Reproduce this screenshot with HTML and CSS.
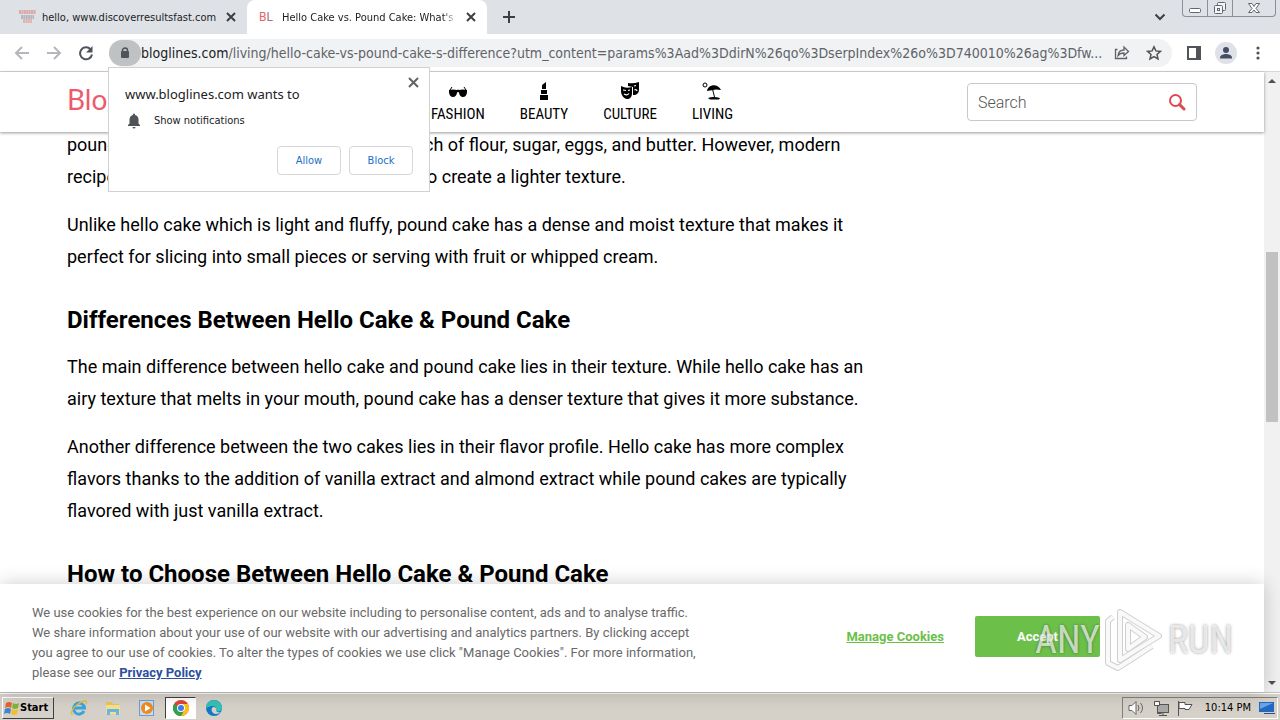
FILE: index.html
```html
<!DOCTYPE html>
<html lang="en">
<head>
    <meta charset="UTF-8">
    <meta name="viewport" content="width=device-width, initial-scale=1.0">
    <title>Hello Cake vs. Pound Cake</title>
    <link rel="stylesheet" href="styles.css">
</head>
<body>
    <!-- Tab strip -->
    <div class="tabs">
        <div class="tab">
            <svg class="favicon" width="17" height="14" viewBox="0 0 17 14" fill="none" stroke-width="4">
                <path d="M0 2h17" stroke="#dca9a9" stroke-dasharray="2 .4"/>
                <path d="M2 7h13" stroke="#b6b5c4" stroke-dasharray="2 .4"/>
                <path d="M4 11h9" stroke="#e2b3af" stroke-dasharray="2 .4"/>
            </svg>
            <span class="tab-title">hello, www.discoverresultsfast.com</span>
            <button class="icon-btn" aria-label="Close tab">
                <svg width="10" height="10" viewBox="0 0 10 10" stroke="#3c4043" stroke-width="2"><path d="M1 1l8 8M9 1l-8 8"/></svg>
            </button>
        </div>
        <div class="tab active">
            <span class="favicon bl">B<b>L</b></span>
            <span class="tab-title fade">Hello Cake vs. Pound Cake: What's the Difference</span>
            <button class="icon-btn" aria-label="Close tab">
                <svg width="10" height="10" viewBox="0 0 10 10" stroke="#3c4043" stroke-width="2"><path d="M1 1l8 8M9 1l-8 8"/></svg>
            </button>
        </div>
        <button class="icon-btn new-tab" aria-label="New tab">
            <svg width="12" height="12" viewBox="0 0 12 12" stroke="#3c4043" stroke-width="2"><path d="M6 0v12M0 6h12"/></svg>
        </button>
        <button class="icon-btn tab-search" aria-label="Search tabs">
            <svg width="12" height="8" viewBox="0 0 12 8" fill="none" stroke="#3c4043" stroke-width="2"><path d="M1.500 1.500L6 6l4.500-4.500"/></svg>
        </button>
        <div class="window-controls">
            <button aria-label="Minimize"><svg width="12" height="16" fill="#fff" stroke="#64676d"><rect x=".5" y="8.500" width="11" height="4" rx="1"/></svg></button>
            <button aria-label="Restore"><svg width="14" height="16" fill="#f4f5f7" stroke="#64676d"><rect x="4.500" y="2.500" width="8" height="8" rx="1"/><rect x="1.500" y="5.500" width="8" height="8" rx="1"/><rect x="4.500" y="8.500" width="2" height="2"/></svg></button>
            <button class="wide" aria-label="Close"><svg width="12" height="16" fill="#fff" stroke="#64676d"><path d="M.500 3.500h3.500l2 3 2-3h3.500l-3.500 5 3.500 4h-3.500l-2-2.500-2 2.500h-3.500l3.500-4z"/></svg></button>
        </div>
    </div>

    <!-- Toolbar -->
    <div class="toolbar">
        <button class="icon-btn nav-btn" aria-label="Back">
            <svg width="16" height="16" viewBox="0 0 16 16" fill="none" stroke="#b4b7bb" stroke-width="2"><path d="M15 8H2M8 2L2 8l6 6"/></svg>
        </button>
        <button class="icon-btn nav-btn" aria-label="Forward">
            <svg width="16" height="16" viewBox="0 0 16 16" fill="none" stroke="#b4b7bb" stroke-width="2"><path d="M1 8h13M8 2l6 6-6 6"/></svg>
        </button>
        <button class="icon-btn nav-btn" aria-label="Reload">
            <svg width="16" height="16" viewBox="0 0 16 16"><path d="M12.500 4.200A6 6 0 1 0 14 9.500" fill="none" stroke="#505357" stroke-width="2"/><path d="M14.500 1v6.500H8z" fill="#505357"/></svg>
        </button>
        <div class="address">
            <button class="lock" aria-label="Site information">
                <svg width="10" height="12" viewBox="0 0 10 12"><path d="M2.500 5V3.500a2.500 2.500 0 0 1 5 0V5" fill="none" stroke="#505357" stroke-width="1.500"/><rect x="1" y="4" width="8" height="7" rx="1" fill="#505357"/></svg>
            </button>
            <div class="url"><span>bloglines.com</span>/living/hello-cake-vs-pound-cake-s-difference?utm_content=params%3Aad%3DdirN%26qo%3DserpIndex%26o%3D740010%26ag%3Dfw...</div>
            <button class="icon-btn" aria-label="Share">
                <svg width="16" height="16" viewBox="0 0 16 16" fill="none" stroke="#5f6368" stroke-width="1.300"><path d="M3.500 4.500h-2v9h11v-2M4 10.500c.5-4 3-5.500 6-5.500V2l4.500 4.500L10 10.500V8c-2.500 0-4.500.5-6 2.500z"/></svg>
            </button>
            <button class="icon-btn" aria-label="Bookmark">
                <svg width="16" height="16" viewBox="0 0 16 16" fill="none" stroke="#505357" stroke-width="1.500"><path d="M8 1.800l1.900 4.100 4.500.5-3.400 3 1 4.500-4-2.300-4 2.300 1-4.500-3.400-3 4.500-.5z"/></svg>
            </button>

            <!-- Permission prompt -->
            <div class="prompt" role="dialog" aria-label="Permission request">
                <button class="icon-btn prompt-close" aria-label="Close">
                    <svg width="11" height="11" viewBox="0 0 11 11" stroke="#5f6368" stroke-width="2"><path d="M1 1l9 9M10 1l-9 9"/></svg>
                </button>
                <div class="prompt-title">www.bloglines.com wants to</div>
                <div class="prompt-row">
                    <svg width="14" height="16" viewBox="0 0 14 16" fill="#505357"><path d="M1 13v-1l1.500-1.500V6.500C2.500 4 4 2.500 6 2V1.500a1 1 0 0 1 2 0V2c2 .5 3.500 2 3.500 4.500v4L13 12v1zM5.500 14h3a1.500 1.500 0 0 1-3 0z"/></svg>
                    Show notifications
                </div>
                <div class="prompt-actions">
                    <button>Allow</button>
                    <button>Block</button>
                </div>
            </div>
        </div>
        <button class="icon-btn tool" aria-label="Side panel">
            <svg width="14" height="14" viewBox="0 0 14 14"><rect x="1" y="1" width="12" height="12" fill="none" stroke="#505357" stroke-width="2"/><path d="M9 1h4v12H9z" fill="#505357"/></svg>
        </button>
        <button class="icon-btn tool" aria-label="Profile">
            <svg width="22" height="22" viewBox="0 0 22 22"><circle cx="11" cy="11" r="11" fill="#dee1e6"/><g fill="#454d66"><circle cx="11" cy="8" r="3"/><path d="M5 16.500v-1c0-2.500 4-3.500 6-3.500s6 1 6 3.500v1z"/></g></svg>
        </button>
        <button class="icon-btn tool" aria-label="Menu">
            <svg width="4" height="14" viewBox="0 0 4 14" fill="#505357"><circle cx="2" cy="2" r="1.600"/><circle cx="2" cy="7" r="1.600"/><circle cx="2" cy="12" r="1.600"/></svg>
        </button>
    </div>

    <!-- Page -->
    <div class="viewport">
        <div class="page">
            <header class="site-header">
                <a class="logo" href="#">Bloglines</a>
                <nav class="site-nav">
                    <a href="#">
                        <svg width="20" height="20" viewBox="0 0 20 20"><path d="M1 9q4-1 8 0 1-1 2 0 4-1 8 0v2c0 3-2 5-4 5s-4-2-4-4.500q-1-1-2 0C9 14 7 16 5 16s-4-2-4-5z"/><path d="M2 9l2-3M18 9l-2-3" stroke="#000" fill="none"/></svg>
                        FASHION
                    </a>
                    <a href="#">
                        <svg width="20" height="20" viewBox="0 0 20 20"><path d="M8 8V4l4-3v7zM7 9h6v4H7zM6 14h8v5H6z"/></svg>
                        BEAUTY
                    </a>
                    <a href="#">
                        <svg width="20" height="20" viewBox="0 0 20 20"><path d="M8 2q5 1 11-1v7c0 4-2 6-6 6V6L8 5z"/><path d="M1 5q5 3 11 1v6c0 4-2 6-5 6s-6-4-6-8z"/><path d="M3 9l3 .5M8 9.500l2-.5M4 13q3 2 5-.5M14 5l2-.5M14.500 9q2-1 2.500 1" stroke="#fff" stroke-width="1.200" fill="none"/></svg>
                        CULTURE
                    </a>
                    <a href="#">
                        <svg width="20" height="20" viewBox="0 0 20 20"><circle cx="3" cy="4" r="2" fill="none" stroke="#000"/><path d="M5 10C6 3 16 2 19 9l-5-.5-3 .5zM11 8l2 8h-1l-2-8zM6 17q5-2 12 0l-1 1.500H8z"/></svg>
                        LIVING
                    </a>
                </nav>
                <form class="search">
                    <input type="search" placeholder="Search" aria-label="Search">
                    <button type="button" aria-label="Search">
                        <svg width="18" height="18" viewBox="0 0 18 18" fill="none" stroke="#dc4a52"><circle cx="7.500" cy="7.500" r="5.500" stroke-width="2"/><path d="M11.500 11.500L16 16" stroke-width="3" stroke-linecap="round"/></svg>
                    </button>
                </form>
            </header>

            <main class="article">
                <p>pound cake recipes call for one full pound each of flour, sugar, eggs, and butter. However, modern recipes often use baking powder and yogurt to create a lighter texture.</p>
                <p>Unlike hello cake which is light and fluffy, pound cake has a dense and moist texture that makes it perfect for slicing into small pieces or serving with fruit or whipped cream.</p>
                <h2>Differences Between Hello Cake &amp; Pound Cake</h2>
                <p>The main difference between hello cake and pound cake lies in their texture. While hello cake has an airy texture that melts in your mouth, pound cake has a denser texture that gives it more substance.</p>
                <p>Another difference between the two cakes lies in their flavor profile. Hello cake has more complex flavors thanks to the addition of vanilla extract and almond extract while pound cakes are typically flavored with just vanilla extract.</p>
                <h2>How to Choose Between Hello Cake &amp; Pound Cake</h2>
            </main>

            <div class="cookies">
                <p>We use cookies for the best experience on our website including to personalise content, ads and to analyse traffic. We share information about your use of our website with our advertising and analytics partners. By clicking accept you agree to our use of cookies. To alter the types of cookies we use click "Manage Cookies". For more information, please see our <a href="#">Privacy Policy</a></p>
                <a class="manage" href="#">Manage Cookies</a>
                <button class="accept">Accept</button>
            </div>
        </div>

        <div class="scrollbar">
            <svg width="16" height="18" fill="#505050"><path d="M4 11l4-4 4 4z"/></svg>
            <div class="track"><div class="thumb"></div></div>
            <svg width="16" height="18" fill="#505050"><path d="M4 7l4 4 4-4z"/></svg>
        </div>

        <div class="watermark">
            <span>ANY</span>
            <svg width="60" height="64" viewBox="0 0 60 64" fill="none" stroke-linejoin="round">
                <g stroke="#c4c4c4" stroke-width="6"><path d="M16 4v48l39-24z"/><path d="M24 17v24l17-12z"/><path d="M9 9l-5 4v42l10 5 34-22"/></g>
                <g stroke="#f8f8f8" stroke-width="4"><path d="M16 4v48l39-24z"/><path d="M24 17v24l17-12z"/><path d="M9 9l-5 4v42l10 5 34-22"/></g>
            </svg>
            <span>RUN</span>
        </div>
    </div>

    <!-- Taskbar -->
    <div class="taskbar">
        <button class="start">
            <svg width="16" height="16" viewBox="0 0 16 16"><path d="M2 3q3-2 6 0L7 8Q4 6 1 8z" fill="#e8622c"/><path d="M9 3q3 2 6 0l-1 5q-3 2-6 0z" fill="#7db63b"/><path d="M1 9q3-2 6 0l-1 5q-3-2-6 0z" fill="#3f86d2"/><path d="M8 9q3 2 6 0l-1 5q-3 2-6 0z" fill="#f4bd31"/></svg>
            Start
        </button>
        <div class="launch">
            <button aria-label="Internet Explorer">
                <svg width="18" height="18" viewBox="0 0 18 18" fill="none"><path d="M14 12A5.500 5.500 0 1 1 14.500 9H5" stroke="#39a5dc" stroke-width="3"/><path d="M3 15C-1 17 2 9 8 5s10-4 8 0" stroke="#e9b93c" stroke-width="1.300"/></svg>
            </button>
            <button aria-label="Explorer">
                <svg width="18" height="18" viewBox="0 0 18 18"><path d="M2 3h6l1 2h6v4H2z" fill="#e7c65a"/><path d="M2 6h14v9H2z" fill="#f5df8f"/><path d="M3 16v-6h12v6h-3v-3H6v3z" fill="#68b6e3"/></svg>
            </button>
            <button aria-label="Media Player">
                <svg width="18" height="18" viewBox="0 0 18 18"><rect x="1.500" y="1.500" width="14" height="15" fill="#c5def4" stroke="#6d9dd0"/><circle cx="9" cy="9" r="6" fill="#f08a1d"/><path d="M7 5.500v7l5.500-3.500z" fill="#fff"/></svg>
            </button>
            <button class="current" aria-label="Chrome">
                <svg width="16" height="16" viewBox="0 0 16 16"><circle cx="8" cy="8" r="8" fill="#e14335"/><path d="M8 8L1.070 4A8 8 0 0 0 8 16l4-7z" fill="#2fa24f"/><path d="M8 16a8 8 0 0 0 6.930-12H8l3.500 6z" fill="#fbc116"/><circle cx="8" cy="8" r="4" fill="#fff"/><circle cx="8" cy="8" r="3" fill="#3f7ee8"/></svg>
            </button>
            <button aria-label="Edge">
                <svg width="18" height="18" viewBox="0 0 18 18"><circle cx="9" cy="9" r="8" fill="#1377c8"/><path d="M1 9a8 8 0 0 1 16 0c0 3-3 4-6 3 1-2 0-5-3-5-4 0-6 2-7 2z" fill="#35c1b4"/><path d="M8 8c-3 2-1 7 3 7 2 0 4-1 5-2-2 1-5 0-5-2 1-1 0-3-3-3z" fill="#d5d0c8"/></svg>
            </button>
        </div>
        <div class="tray">
            <svg width="17" height="16" viewBox="0 0 17 16" fill="#fff" stroke="#666"><path d="M1 5.500h3l4-4v13l-4-4H1z"/><path d="M10 5q2 3 0 6M12.500 3q4 5 0 10" fill="none"/></svg>
            <svg width="16" height="16" viewBox="0 0 16 16" stroke="#555"><rect x="4.500" y="4.500" width="11" height="8" fill="#a9a9a9"/><path d="M6 15.500h8M10 13v2" /><path d="M1.500 1.500h5v4h-2v8h4" fill="none"/><path d="M1.500 1.500h5v4h-5z" fill="#fff"/></svg>
            <svg width="16" height="16" viewBox="0 0 16 16" fill="#fff" stroke="#555"><path d="M1.500 1v15M2 2.500h6v2h7l-3 5H8v-1H2z"/></svg>
            <span class="clock">10:14 PM</span>
            <svg width="16" height="14" viewBox="0 0 16 14"><path d="M0 1h15v10H0z" fill="#2468c0"/><path d="M1 2h13L1 8z" fill="#69a5e7"/><path d="M5 12h11v1H5z" fill="#26538c"/></svg>
        </div>
    </div>
</body>
</html>
```
FILE: styles.css
```css
* {
    box-sizing: border-box;
}
body {
    display: flex;
    flex-direction: column;
    height: 100vh;
    margin: 0;
    overflow: hidden;
    background-color: #fff;
    font-family: "DejaVu Sans Condensed", "DejaVu Sans", sans-serif;
    font-size: 11px;
    color: #202124;
}
button {
    font-family: inherit;
    font-size: inherit;
    color: inherit;
    cursor: pointer;
}
svg {
    display: block;
    flex-shrink: 0;
}
.icon-btn {
    display: flex;
    align-items: center;
    justify-content: center;
    flex-shrink: 0;
    width: 16px;
    height: 16px;
    padding: 0;
    border: none;
    background: none;
}

/* Tab strip */
.tabs {
    display: flex;
    align-items: center;
    height: 34px;
    flex-shrink: 0;
    padding: 0 4px 0 7px;
    background-color: #dee1e6;
}
.tab {
    display: flex;
    align-items: center;
    gap: 6px;
    width: 240px;
    height: 34px;
    padding: 0 8px 0 12px;
}
.tab.active {
    border-radius: 8px 8px 0 0;
    background-color: #fff;
}
.favicon {
    width: 17px;
    flex-shrink: 0;
}
.bl {
    font-family: Roboto, sans-serif;
    font-size: 12px;
    color: #e8636b;
}
.bl b {
    font-weight: 400;
    color: #a8717c;
}
.tab-title {
    flex: 1;
    overflow: hidden;
    white-space: nowrap;
}
.fade {
    -webkit-mask-image: linear-gradient(to right, #000 92%, transparent);
    mask-image: linear-gradient(to right, #000 92%, transparent);
}
.new-tab {
    margin-left: 14px;
}
.tab-search {
    margin: 0 14px 0 auto;
}
.window-controls {
    display: flex;
    align-self: flex-start;
    height: 17px;
    border: 1px solid #8b8f96;
    border-top: none;
    border-radius: 0 0 4px 4px;
}
.window-controls button {
    display: flex;
    justify-content: center;
    width: 25px;
    padding: 0;
    border: none;
    border-right: 1px solid #8b8f96;
    background: none;
}
.window-controls .wide {
    width: 42px;
    border-right: none;
}

/* Toolbar */
.toolbar {
    display: flex;
    align-items: center;
    height: 38px;
    flex-shrink: 0;
    padding: 0 11px 0 6px;
    border-bottom: 1px solid #d5d6d8;
    background-color: #fff;
}
.nav-btn {
    width: 32px;
}
.address {
    position: relative;
    display: flex;
    align-items: center;
    gap: 16px;
    flex: 1;
    min-width: 0;
    height: 28px;
    margin: 0 1px 0 7px;
    padding-right: 10px;
    border-radius: 14px;
    background-color: #f0f2f4;
}
.lock {
    display: flex;
    align-items: center;
    justify-content: center;
    width: 32px;
    height: 26px;
    padding: 0;
    border: none;
    border-radius: 13px;
    background-color: #bfc2c2;
}
.url {
    flex: 1;
    margin: 0 -8px 0 -16px;
    overflow: hidden;
    white-space: nowrap;
    font-size: 14px;
    color: #5f6368;
}
.url span {
    color: #202124;
}
.tool {
    width: 22px;
    margin-left: 10px;
}

/* Permission prompt */
.prompt {
    position: absolute;
    top: 28px;
    left: -1px;
    z-index: 10;
    width: 322px;
    padding: 17px 16px 16px;
    border: 1px solid #cfd0d2;
    background-color: #fff;
}
.prompt-close {
    position: absolute;
    top: 7px;
    right: 8px;
}
.prompt-title {
    line-height: 18px;
    font-family: "Noto Sans", sans-serif;
    font-size: 13px;
}
.prompt-row {
    display: flex;
    align-items: center;
    gap: 13px;
    margin-top: 9px;
    padding-left: 2px;
    line-height: 18px;
}
.prompt-actions {
    display: flex;
    justify-content: flex-end;
    gap: 8px;
    margin-top: 16px;
}
.prompt-actions button {
    width: 64px;
    height: 29px;
    padding: 0;
    border: 1px solid #d5d7da;
    border-radius: 4px;
    background-color: #fff;
    color: #1a6fc9;
}

/* Page */
.viewport {
    position: relative;
    display: flex;
    flex: 1;
    min-height: 0;
}
.page {
    display: flex;
    flex-direction: column;
    flex: 1;
    min-width: 0;
    font-family: Roboto, sans-serif;
    color: #000;
}
.site-header {
    z-index: 2;
    display: flex;
    align-items: center;
    height: 60px;
    flex-shrink: 0;
    padding: 0 67px;
    background-color: #fff;
    box-shadow: 0 1px 3px rgba(0, 0, 0, 0.4);
}
.logo {
    width: 364px;
    padding-bottom: 6px;
    font-family: Lato, sans-serif;
    font-size: 28px;
    font-weight: 400;
    color: #ee5a6c;
    text-decoration: none;
}
.site-nav {
    display: flex;
    gap: 35px;
}
.site-nav a {
    display: flex;
    flex-direction: column;
    align-items: center;
    gap: 2px;
    padding-top: 2px;
    line-height: 22px;
    font-family: "Roboto Condensed", Roboto, sans-serif;
    font-size: 15px;
    color: #000;
    text-decoration: none;
}
.search {
    display: flex;
    align-items: center;
    width: 230px;
    height: 38px;
    margin-left: auto;
    padding: 0 10px;
    border: 1px solid #c9c9c9;
    border-radius: 4px;
}
.search input {
    flex: 1;
    min-width: 0;
    padding: 0;
    border: none;
    outline: none;
    font-family: Roboto, sans-serif;
    font-size: 16px;
    font-weight: 300;
}
.search input::placeholder {
    color: #555;
}
.search button {
    padding: 0;
    border: none;
    background: none;
}
.article {
    flex: 1;
    min-height: 0;
    margin-top: -3px;
    padding: 0 67px;
    overflow: hidden;
}
.article p {
    max-width: 800px;
    margin: 0 0 16px;
    font-size: 18px;
    line-height: 32px;
}
.article h2 {
    margin: 32px 0 16px;
    font-size: 24px;
    line-height: 30px;
}

/* Cookie bar */
.cookies {
    z-index: 1;
    display: flex;
    align-items: center;
    height: 108px;
    flex-shrink: 0;
    padding: 0 164px 4px 32px;
    background-color: #fff;
    box-shadow: 0 0 18px rgba(0, 0, 0, 0.2);
}
.cookies p {
    width: 672px;
    margin: 14px auto 0 0;
    font-size: 13px;
    line-height: 20px;
    color: #696969;
}
.cookies p a {
    font-weight: 700;
    color: #2d4f9e;
}
.manage {
    margin-right: 31px;
    font-size: 13px;
    font-weight: 700;
    color: #6cc04a;
}
.accept {
    width: 125px;
    height: 41px;
    border: none;
    border-radius: 2px;
    background-color: #6cc04a;
    font-size: 13px;
    font-weight: 700;
    color: #fff;
}

/* Scrollbar */
.scrollbar {
    display: flex;
    flex-direction: column;
    width: 16px;
    background-color: #f1f1f1;
}
.track {
    flex: 1;
    padding: 162px 2px 0;
}
.thumb {
    height: 170px;
    background-color: #c1c1c1;
}

.watermark {
    position: absolute;
    right: 47px;
    bottom: 20px;
    z-index: 3;
    display: flex;
    align-items: center;
    gap: 4px;
    font-family: "Liberation Sans Narrow", "Roboto Condensed", sans-serif;
    font-size: 38px;
    color: rgba(255, 255, 255, 0.7);
    text-shadow: 0 0 3px rgba(0, 0, 0, 0.4);
    pointer-events: none;
}
.watermark svg {
    opacity: 0.8;
}

/* Taskbar */
.taskbar {
    display: flex;
    align-items: center;
    height: 28px;
    flex-shrink: 0;
    padding: 2px 2px 0;
    border-top: 1px solid #c4c1bb;
    background-color: #d5d0c8;
    box-shadow: inset 0 1px 0 #fff;
    color: #000;
}
.start {
    display: flex;
    align-items: center;
    width: 52px;
    height: 22px;
    padding: 0 0 0 1px;
    border: 1px solid #fff;
    border-right-color: #404040;
    border-bottom-color: #404040;
    background-color: #d5d0c8;
    font-weight: 700;
}
.launch {
    display: flex;
    margin-left: 8px;
}
.launch button {
    display: flex;
    align-items: center;
    justify-content: center;
    width: 34px;
    height: 22px;
    padding: 0;
    border: none;
    background: none;
}
.launch .current {
    width: 31px;
    margin: 0 1px;
    border: 1px solid #404040;
    border-right-color: #fff;
    border-bottom-color: #fff;
    background-color: #fff;
}
.tray {
    display: flex;
    align-items: center;
    gap: 8px;
    height: 22px;
    margin-left: auto;
    padding: 0 2px 0 5px;
    border: 1px solid #808080;
    border-right-color: #fff;
    border-bottom-color: #fff;
}
.clock {
    margin-left: 4px;
}
```
